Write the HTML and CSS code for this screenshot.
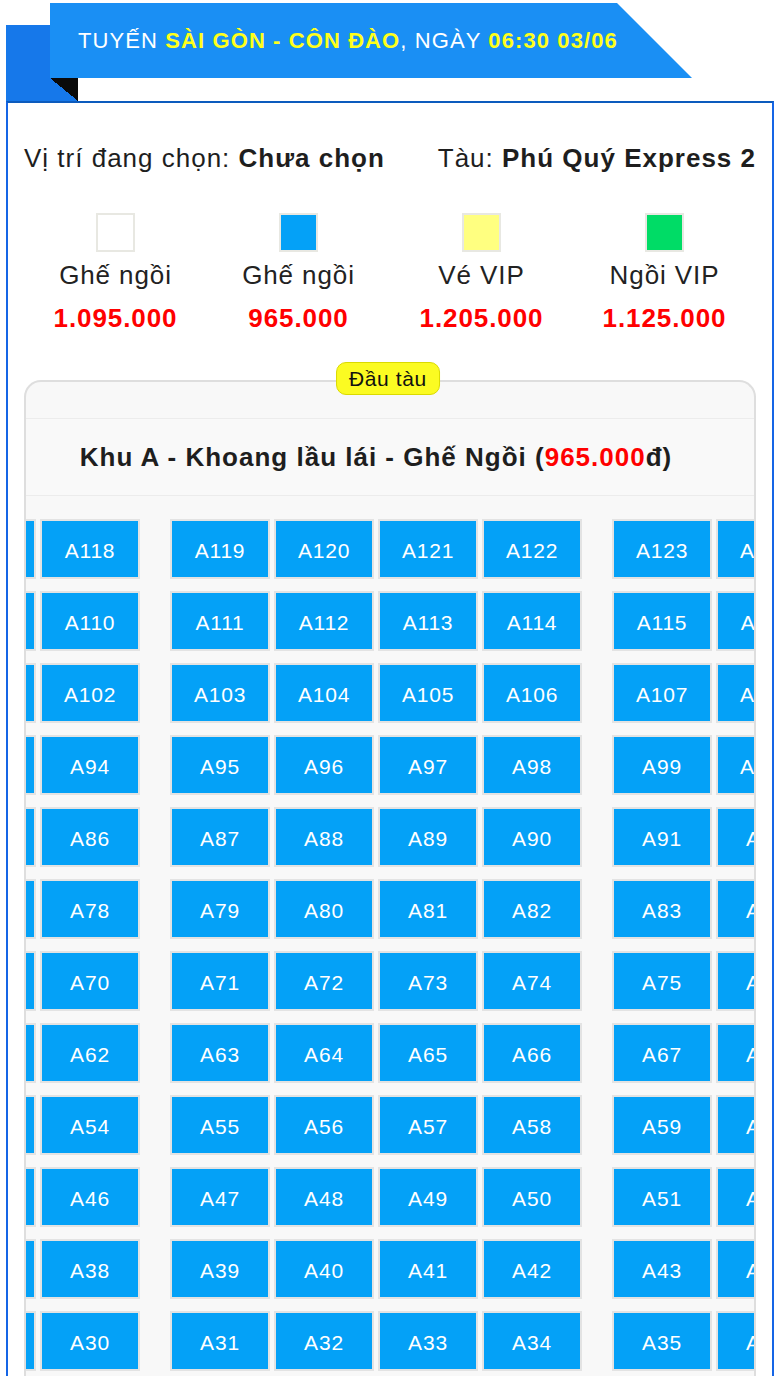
FILE: index.html
```html
<!DOCTYPE html>
<html lang="vi">
<head>
<meta charset="utf-8">
<title>Chọn ghế</title>
<link rel="stylesheet" href="styles.css">
</head>
<body>
<header class="hero">
  <div class="hero-tab"></div>
  <div class="hero-main">
    <div class="ribbon"><span class="ribbon-text">TUYẾN <b>SÀI GÒN - CÔN ĐÀO</b>, NGÀY <b>06:30 03/06</b></span></div>
    <div class="fold"></div>
  </div>
</header>
<main class="panel">
  <div class="info">
    <div>Vị trí đang chọn: <b>Chưa chọn</b></div>
    <div>Tàu: <b>Phú Quý Express 2</b></div>
  </div>
  <div class="legend">
    <div class="legend-item"><span class="swatch sw-white"></span><span class="legend-label">Ghế ngồi</span><span class="legend-price">1.095.000</span></div>
    <div class="legend-item"><span class="swatch sw-blue"></span><span class="legend-label">Ghế ngồi</span><span class="legend-price">965.000</span></div>
    <div class="legend-item"><span class="swatch sw-yellow"></span><span class="legend-label">Vé VIP</span><span class="legend-price">1.205.000</span></div>
    <div class="legend-item"><span class="swatch sw-green"></span><span class="legend-label">Ngồi VIP</span><span class="legend-price">1.125.000</span></div>
  </div>
  <section class="seatmap">
    <div class="badge">Đầu tàu</div>
    <div class="seatmap-clip">
      <div class="track">
        <div class="zone-title"><span>Khu A - Khoang lầu lái - Ghế Ngồi (<span class="red">965.000</span>đ)</span></div>
        <div class="rows">
          <div class="row"><div class="grp"><div class="seat">A117</div><div class="seat">A118</div></div><div class="grp"><div class="seat">A119</div><div class="seat">A120</div><div class="seat">A121</div><div class="seat">A122</div></div><div class="grp"><div class="seat">A123</div><div class="seat">A124</div></div></div>
          <div class="row"><div class="grp"><div class="seat">A109</div><div class="seat">A110</div></div><div class="grp"><div class="seat">A111</div><div class="seat">A112</div><div class="seat">A113</div><div class="seat">A114</div></div><div class="grp"><div class="seat">A115</div><div class="seat">A116</div></div></div>
          <div class="row"><div class="grp"><div class="seat">A101</div><div class="seat">A102</div></div><div class="grp"><div class="seat">A103</div><div class="seat">A104</div><div class="seat">A105</div><div class="seat">A106</div></div><div class="grp"><div class="seat">A107</div><div class="seat">A108</div></div></div>
          <div class="row"><div class="grp"><div class="seat">A93</div><div class="seat">A94</div></div><div class="grp"><div class="seat">A95</div><div class="seat">A96</div><div class="seat">A97</div><div class="seat">A98</div></div><div class="grp"><div class="seat">A99</div><div class="seat">A100</div></div></div>
          <div class="row"><div class="grp"><div class="seat">A85</div><div class="seat">A86</div></div><div class="grp"><div class="seat">A87</div><div class="seat">A88</div><div class="seat">A89</div><div class="seat">A90</div></div><div class="grp"><div class="seat">A91</div><div class="seat">A92</div></div></div>
          <div class="row"><div class="grp"><div class="seat">A77</div><div class="seat">A78</div></div><div class="grp"><div class="seat">A79</div><div class="seat">A80</div><div class="seat">A81</div><div class="seat">A82</div></div><div class="grp"><div class="seat">A83</div><div class="seat">A84</div></div></div>
          <div class="row"><div class="grp"><div class="seat">A69</div><div class="seat">A70</div></div><div class="grp"><div class="seat">A71</div><div class="seat">A72</div><div class="seat">A73</div><div class="seat">A74</div></div><div class="grp"><div class="seat">A75</div><div class="seat">A76</div></div></div>
          <div class="row"><div class="grp"><div class="seat">A61</div><div class="seat">A62</div></div><div class="grp"><div class="seat">A63</div><div class="seat">A64</div><div class="seat">A65</div><div class="seat">A66</div></div><div class="grp"><div class="seat">A67</div><div class="seat">A68</div></div></div>
          <div class="row"><div class="grp"><div class="seat">A53</div><div class="seat">A54</div></div><div class="grp"><div class="seat">A55</div><div class="seat">A56</div><div class="seat">A57</div><div class="seat">A58</div></div><div class="grp"><div class="seat">A59</div><div class="seat">A60</div></div></div>
          <div class="row"><div class="grp"><div class="seat">A45</div><div class="seat">A46</div></div><div class="grp"><div class="seat">A47</div><div class="seat">A48</div><div class="seat">A49</div><div class="seat">A50</div></div><div class="grp"><div class="seat">A51</div><div class="seat">A52</div></div></div>
          <div class="row"><div class="grp"><div class="seat">A37</div><div class="seat">A38</div></div><div class="grp"><div class="seat">A39</div><div class="seat">A40</div><div class="seat">A41</div><div class="seat">A42</div></div><div class="grp"><div class="seat">A43</div><div class="seat">A44</div></div></div>
          <div class="row"><div class="grp"><div class="seat">A29</div><div class="seat">A30</div></div><div class="grp"><div class="seat">A31</div><div class="seat">A32</div><div class="seat">A33</div><div class="seat">A34</div></div><div class="grp"><div class="seat">A35</div><div class="seat">A36</div></div></div>
          <div class="row"><div class="grp"><div class="seat">A21</div><div class="seat">A22</div></div><div class="grp"><div class="seat">A23</div><div class="seat">A24</div><div class="seat">A25</div><div class="seat">A26</div></div><div class="grp"><div class="seat">A27</div><div class="seat">A28</div></div></div>
          <div class="row"><div class="grp"><div class="seat">A13</div><div class="seat">A14</div></div><div class="grp"><div class="seat">A15</div><div class="seat">A16</div><div class="seat">A17</div><div class="seat">A18</div></div><div class="grp"><div class="seat">A19</div><div class="seat">A20</div></div></div>
        </div>
      </div>
    </div>
  </section>
</main>
</body>
</html>
```
FILE: styles.css
```css
* { box-sizing: border-box; }
html, body { margin: 0; padding: 0; background: #fff; }
body {
  font-family: "Liberation Sans", Arial, Helvetica, sans-serif;
  color: #222;
  width: 779px;
}

/* ---------- Ribbon header ---------- */
.hero {
  display: flex;
  align-items: flex-end;
  height: 101px;
  padding-top: 3px;
  padding-left: 6px;
}
.hero-tab {
  width: 44px;
  height: 76px;
  background: #1678ea;
}
.hero-main {
  display: flex;
  flex-direction: column;
  align-self: stretch;
}
.ribbon {
  width: 642px;
  height: 75px;
  background: #1a8ff4;
  clip-path: polygon(0 0, 567px 0, 642px 100%, 0 100%);
  display: flex;
  align-items: center;
  padding-left: 28px;
  color: #fff;
  font-size: 22px;
  letter-spacing: 1.1px;
  white-space: nowrap;
}
.ribbon b { color: #ffff1a; font-weight: 700; }
.fold {
  width: 28px;
  height: 23px;
  background: linear-gradient(to top right, #1678ea 50%, #0a0a0a 50%);
}

/* ---------- Main panel ---------- */
.panel {
  margin-left: 6px;
  width: 768px;
  border: 2px solid #1565e6;
  border-top-color: #0c5bbd;
  border-bottom: none;
  padding: 0 16px;
  min-height: 1280px;
}
.info {
  margin-top: 40px;
  display: flex;
  justify-content: space-between;
  font-size: 26px;
  letter-spacing: 1px;
  line-height: 30px;
  color: #1e1e1e;
}
.info b { font-weight: 700; }

.legend {
  margin-top: 40px;
  display: grid;
  grid-template-columns: repeat(4, 1fr);
}
.legend-item {
  display: flex;
  flex-direction: column;
  align-items: center;
}
.swatch {
  width: 39px;
  height: 39px;
  border: 2px solid #e8e8e2;
}
.sw-white { background: #fff; }
.sw-blue { background: #04a1f7; }
.sw-yellow { background: #ffff80; }
.sw-green { background: #00dc66; }
.legend-label {
  margin-top: 8px;
  font-size: 26px;
  letter-spacing: 0.9px;
  line-height: 30px;
  color: #222;
}
.legend-price {
  margin-top: 13px;
  font-size: 26px;
  letter-spacing: 0.9px;
  line-height: 30px;
  font-weight: 700;
  color: #ff0000;
}

/* ---------- Seat map ---------- */
.seatmap {
  position: relative;
  margin-top: 47px;
  border: 2px solid #dedede;
  border-bottom: none;
  border-radius: 17px 17px 0 0;
  background: #f8f8f8;
}
.badge {
  position: absolute;
  top: -20px;
  left: 50%;
  transform: translateX(-52%);
  height: 33px;
  padding: 0 12px;
  display: flex;
  align-items: center;
  font-size: 21px;
  letter-spacing: 0.6px;
  color: #111;
  background: #fbfb22;
  border: 1px solid #dada00;
  border-radius: 10px;
  white-space: nowrap;
  z-index: 2;
}
.seatmap-clip {
  overflow: hidden;
  border-radius: 15px 15px 0 0;
}
.track {
  width: 876px;
  margin-left: -88px;
  padding-top: 36px;
}
.zone-title {
  height: 78px;
  border-top: 1px solid #ececec;
  border-bottom: 1px solid #ececec;
  display: flex;
  align-items: center;
  justify-content: center;
  font-size: 26px;
  letter-spacing: 1px;
  font-weight: 700;
  color: #1e1e1e;
  background: #f9f9f9;
}
.red { color: #ff0000; }
.rows {
  padding-top: 25px;
  display: flex;
  flex-direction: column;
  gap: 16px;
}
.row {
  display: flex;
  gap: 34px;
}
.grp {
  display: flex;
  gap: 8px;
}
.seat {
  width: 96px;
  height: 56px;
  padding-top: 3px;
  background: #04a1f7;
  box-shadow: 0 0 0 2px #e3e3e3;
  color: #fff;
  font-size: 21px;
  letter-spacing: 0.8px;
  display: flex;
  align-items: center;
  justify-content: center;
}
```
